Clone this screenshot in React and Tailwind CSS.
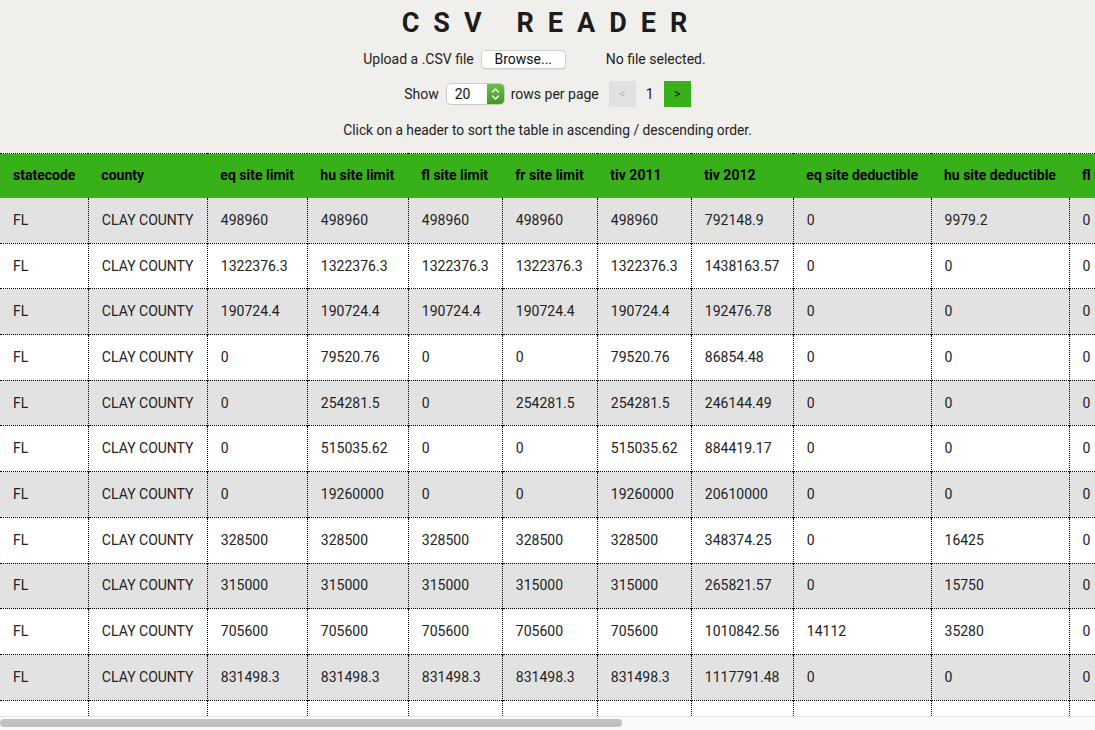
import React, { useState } from "react";

const columns = [
  { key: "statecode", label: "statecode", w: "w-[88px]" },
  { key: "county", label: "county", w: "w-[119px]" },
  { key: "eq", label: "eq site limit", w: "w-[100px]" },
  { key: "hu", label: "hu site limit", w: "w-[101px]" },
  { key: "fl", label: "fl site limit", w: "w-[94px]" },
  { key: "fr", label: "fr site limit", w: "w-[95px]" },
  { key: "t11", label: "tiv 2011", w: "w-[94px]" },
  { key: "t12", label: "tiv 2012", w: "w-[102px]" },
  { key: "eqd", label: "eq site deductible", w: "w-[137px]" },
  { key: "hud", label: "hu site deductible", w: "w-[138px]" },
  { key: "fld", label: "fl site deductible", w: "w-[134px]" },
  { key: "frd", label: "fr site deductible", w: "w-[134px]" },
  { key: "lat", label: "point latitude", w: "" },
  { key: "lng", label: "point longitude", w: "" },
  { key: "line", label: "line", w: "" },
  { key: "cons", label: "construction", w: "" },
  { key: "gran", label: "point granularity", w: "" },
];

// eq, hu, fl, fr, tiv2011, tiv2012, eqd, hud, fld, frd, lat, lng, line, construction, granularity
const raw = [
  ["498960", "498960", "498960", "498960", "498960", "792148.9", "0", "9979.2", "0", "0", "30.102261", "-81.711777", "Residential", "Masonry", "1"],
  ["1322376.3", "1322376.3", "1322376.3", "1322376.3", "1322376.3", "1438163.57", "0", "0", "0", "0", "30.063936", "-81.707664", "Residential", "Masonry", "3"],
  ["190724.4", "190724.4", "190724.4", "190724.4", "190724.4", "192476.78", "0", "0", "0", "0", "30.089579", "-81.700455", "Residential", "Wood", "1"],
  ["0", "79520.76", "0", "0", "79520.76", "86854.48", "0", "0", "0", "0", "30.063236", "-81.707703", "Residential", "Wood", "3"],
  ["0", "254281.5", "0", "254281.5", "254281.5", "246144.49", "0", "0", "0", "0", "30.060614", "-81.702675", "Residential", "Wood", "1"],
  ["0", "515035.62", "0", "0", "515035.62", "884419.17", "0", "0", "0", "0", "30.063236", "-81.707703", "Residential", "Masonry", "3"],
  ["0", "19260000", "0", "0", "19260000", "20610000", "0", "0", "0", "0", "30.102226", "-81.713882", "Commercial", "Reinforced Concrete", "1"],
  ["328500", "328500", "328500", "328500", "328500", "348374.25", "0", "16425", "0", "0", "30.102217", "-81.707146", "Residential", "Wood", "1"],
  ["315000", "315000", "315000", "315000", "315000", "265821.57", "0", "15750", "0", "0", "30.118774", "-81.704613", "Residential", "Wood", "1"],
  ["705600", "705600", "705600", "705600", "705600", "1010842.56", "14112", "35280", "0", "0", "30.100628", "-81.703751", "Residential", "Masonry", "1"],
  ["831498.3", "831498.3", "831498.3", "831498.3", "831498.3", "1117791.48", "0", "0", "0", "0", "30.10216", "-81.719444", "Residential", "Masonry", "1"],
  ["0", "24059.09", "0", "0", "24059.09", "33952.19", "0", "0", "0", "0", "30.095957", "-81.695099", "Residential", "Wood", "1"],
  ["0", "48115.94", "0", "0", "48115.94", "66755.39", "0", "0", "0", "0", "30.100073", "-81.739822", "Residential", "Wood", "1"],
  ["0", "28869.12", "0", "0", "28869.12", "42826.99", "0", "0", "0", "0", "30.09248", "-81.725167", "Residential", "Wood", "1"],
  ["0", "56135.64", "0", "0", "56135.64", "50656.8", "0", "0", "0", "0", "30.101356", "-81.726248", "Residential", "Wood", "1"],
  ["0", "48115.94", "0", "0", "48115.94", "67905.07", "0", "0", "0", "0", "30.113743", "-81.727463", "Residential", "Wood", "1"],
  ["0", "48115.94", "0", "0", "48115.94", "66938.9", "0", "0", "0", "0", "30.121655", "-81.732391", "Residential", "Wood", "3"],
  ["0", "80426.65", "0", "0", "80426.65", "73798.5", "0", "0", "0", "0", "30.109537", "-81.741661", "Residential", "Wood", "1"],
  ["0", "48115.94", "0", "0", "48115.94", "62427.82", "0", "0", "0", "0", "30.110709", "-81.729958", "Residential", "Wood", "1"],
  ["0", "60036.24", "0", "0", "60036.24", "73573.37", "0", "0", "0", "0", "30.081767", "-81.708397", "Residential", "Wood", "1"],
];

const rows = raw.map((r) => ["FL", "CLAY COUNTY", ...r]);

function RowsSelect({ value }) {
  return (
    <div className="relative h-[22px] w-[59px] rounded-[5px] border border-[#c9c9c9] bg-white flex items-center overflow-hidden">
      <span className="pl-[8px] text-[14px] text-[#111]">{value}</span>
      <div className="absolute right-0 top-0 bottom-0 w-[17px] bg-gradient-to-b from-[#6cc04a] to-[#3f9a1f] flex items-center justify-center">
        <svg width="9" height="14" viewBox="0 0 9 14" fill="none" stroke="white" strokeWidth="1.4" strokeLinecap="round" strokeLinejoin="round">
          <path d="M1.5 5 L4.5 2 L7.5 5" />
          <path d="M1.5 9 L4.5 12 L7.5 9" />
        </svg>
      </div>
    </div>
  );
}

export default function App() {
  const [perPage] = useState(20);
  const page = 1;

  return (
    <div className="w-[1095px] h-[730px] bg-[#f1efeb] font-['Roboto',sans-serif] text-[#222] overflow-hidden">
      <header className="h-[153px] flex flex-col items-center pt-[7px]">
        <h1 className="h-[32px] leading-[32px] text-[27px] font-bold tracking-[0.52em] text-[#1c1c1c] pl-[8px]">
          CSV READER
        </h1>
        <div className="mt-[8px] h-[24px] flex items-center text-[14px] text-[#222]">
          <span>Upload a .CSV file</span>
          <button className="ml-[7px] h-[19px] w-[85px] rounded-[4px] border border-[#cfcfcf] bg-white text-[14px] leading-[17px] text-[#111] shadow-[0_1px_0_rgba(0,0,0,0.06)]">
            Browse...
          </button>
          <span className="ml-[40px] w-[126px]">No file selected.</span>
        </div>
        <div className="mt-[10px] h-[26px] flex items-center text-[14px] text-[#222]">
          <span>Show</span>
          <div className="ml-[7px]">
            <RowsSelect value={perPage} />
          </div>
          <span className="ml-[6px]">rows per page</span>
          <button className="ml-[10px] h-[26px] w-[27px] bg-[#e1e1e1] text-[#b5b5b5] text-[13px]">&lt;</button>
          <span className="w-[28px] text-center">{page}</span>
          <button className="h-[26px] w-[27px] bg-[#38b01a] text-[#111] text-[13px]">&gt;</button>
        </div>
        <p className="mt-[14px] h-[18px] leading-[18px] text-[13.8px] text-[#222]">
          Click on a header to sort the table in ascending / descending order.
        </p>
      </header>

      <div className="h-[563px] overflow-hidden bg-white">
        <table className="w-max border-collapse text-[14px] whitespace-nowrap">
          <thead>
            <tr className="bg-[#38b01a] border-t border-dotted border-black">
              {columns.map((c) => (
                <th
                  key={c.key}
                  className={`${c.w} h-[44px] px-[13px] text-left font-bold text-black cursor-pointer`}
                >
                  {c.label}
                </th>
              ))}
            </tr>
          </thead>
          <tbody>
            {rows.map((r, i) => (
              <tr
                key={i}
                className={`${i % 2 === 0 ? "bg-[#e2e2e2]" : "bg-white"} ${i > 0 ? "border-t border-dotted border-black" : ""}`}
              >
                {r.map((v, j) => (
                  <td
                    key={j}
                    className={`h-[45.7px] px-[13px] text-[#222] ${j > 0 ? "border-l border-dotted border-black" : ""}`}
                  >
                    {v}
                  </td>
                ))}
              </tr>
            ))}
          </tbody>
        </table>
      </div>

      {/* horizontal scrollbar */}
      <div className="h-[14px] bg-[#fafafa] border-t border-[#e6e6e6] pt-[2px]">
        <div className="h-[8px] w-[622px] rounded-full bg-[#c1c1c1]" />
      </div>
    </div>
  );
}
